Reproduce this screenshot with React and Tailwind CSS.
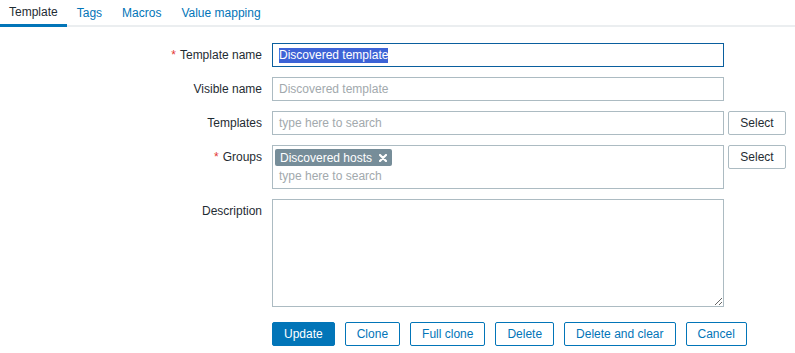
import React from "react";

const tabs = ["Template", "Tags", "Macros", "Value mapping"];

function Label({ children, required }) {
    return (
        <div className="w-[262px] shrink-0 text-right leading-[24px]">
            {required && <span className="text-[#e33734] mr-[4px]">*</span>}
            {children}
        </div>
    );
}

function SelectButton() {
    return (
        <button className="ml-[4px] w-[58px] h-[24px] border border-[#acbbc2] bg-white text-[#1f2c33] rounded-[2px]">
            Select
        </button>
    );
}

export default function App() {
    const actions = ["Clone", "Full clone", "Delete", "Delete and clear", "Cancel"];

    return (
        <div className="min-h-screen bg-white font-['Liberation_Sans',Arial,sans-serif] text-[12px] text-[#1f2c33]">
            <div className="flex h-[27px]">
                {tabs.map((t, i) => (
                    <div
                        key={t}
                        className={
                            i === 0
                                ? "px-[9px] flex items-center border-b-[3px] border-[#0275b8] text-[#1f2c33]"
                                : "px-[10px] flex items-center border-b-2 border-[#ebeef0] text-[#0275b8]"
                        }
                    >
                        {t}
                    </div>
                ))}
                <div className="flex-1 border-b-2 border-[#ebeef0]" />
            </div>

            <div className="pt-[16px] flex flex-col gap-[10px]">
                <div className="flex gap-[10px]">
                    <Label required>Template name</Label>
                    <div className="w-[452px] h-[24px] border border-[#0a5f9e] px-[6px] flex items-center">
                        <span className="bg-[#3d63d6] text-white leading-[15px]">Discovered template</span>
                    </div>
                </div>

                <div className="flex gap-[10px]">
                    <Label>Visible name</Label>
                    <div className="w-[452px] h-[24px] border border-[#acbbc2] px-[6px] flex items-center text-[#a2a9ad]">
                        Discovered template
                    </div>
                </div>

                <div className="flex gap-[10px]">
                    <Label>Templates</Label>
                    <div className="flex">
                        <div className="w-[452px] h-[24px] border border-[#acbbc2] px-[6px] flex items-center text-[#a2a9ad]">
                            type here to search
                        </div>
                        <SelectButton />
                    </div>
                </div>

                <div className="flex gap-[10px]">
                    <Label required>Groups</Label>
                    <div className="flex items-start">
                        <div className="w-[452px] h-[44px] border border-[#acbbc2] pt-[3px] pl-[2px] flex flex-col">
                            <div className="self-start h-[17px] bg-[#768d99] text-white rounded-[2px] pl-[5px] pr-[5px] flex items-center">
                                <span>Discovered hosts</span>
                                <svg className="ml-[7px]" width="8" height="8" viewBox="0 0 8 8">
                                    <path d="M1 1 L7 7 M7 1 L1 7" stroke="white" strokeWidth="2.2" strokeLinecap="round" />
                                </svg>
                            </div>
                            <div className="pl-[4px] leading-[20px] text-[#a2a9ad]">type here to search</div>
                        </div>
                        <SelectButton />
                    </div>
                </div>

                <div className="flex gap-[10px]">
                    <Label>Description</Label>
                    <textarea className="w-[452px] h-[108px] border border-[#acbbc2] outline-none" />
                </div>

                <div className="flex gap-[10px] mt-[5px]">
                    <div className="w-[262px] shrink-0" />
                    <div className="flex gap-[10px]">
                        <button className="h-[24px] px-[11px] border border-[#0275b8] bg-[#0275b8] text-white rounded-[2px]">
                            Update
                        </button>
                        {actions.map((a) => (
                            <button
                                key={a}
                                className="h-[24px] px-[11px] border border-[#0275b8] bg-white text-[#0275b8] rounded-[2px]"
                            >
                                {a}
                            </button>
                        ))}
                    </div>
                </div>
            </div>
        </div>
    );
}
